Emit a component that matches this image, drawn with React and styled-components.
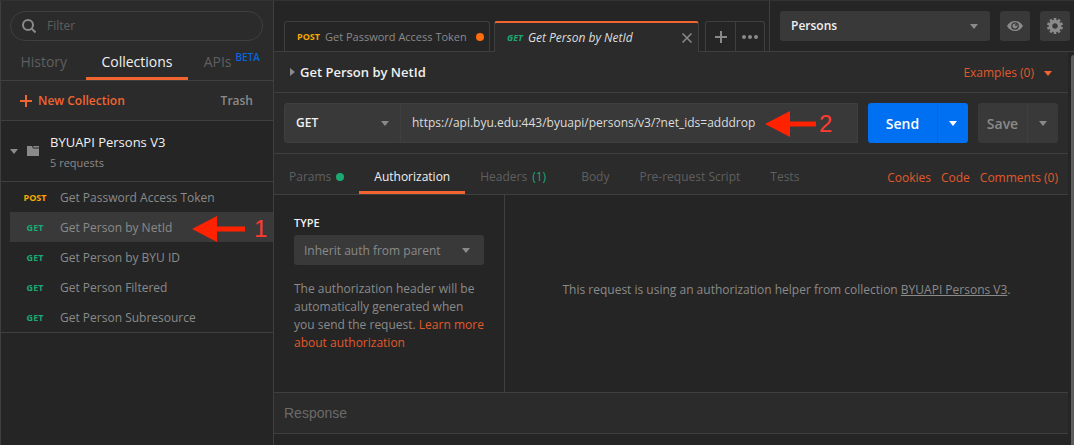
import React from 'react';
import styled, { createGlobalStyle, css } from 'styled-components';

const c = {
  panel: '#2b2b2b',
  base: '#252525',
  field: '#393939',
  line: '#3f3f3f',
  text: '#f0f0f0',
  soft: '#8a8a8a',
  faint: '#5f5f5f',
  orange: '#f26430',
  link: '#e0592b',
  green: '#1ba873',
  amber: '#f5a800',
  blue: '#0070f2',
  red: '#ff2200',
};

const Global = createGlobalStyle`
  * { box-sizing: border-box; }
  body {
    margin: 0;
    background: ${c.base};
    color: ${c.soft};
    font: 12px/18px "Open Sans", sans-serif;
  }
  button, input, select { font: inherit; color: inherit; margin: 0; padding: 0; border: 0; border-radius: 0; background: none; }
  button { cursor: pointer; white-space: nowrap; }
  svg { display: block; flex: none; }
`;

const Window = styled.div`
  display: flex;
  min-height: 100vh;
  border-top: 1px solid #323232;
`;

const Sidebar = styled.aside`
  position: relative;
  flex: none;
  width: 274px;
  border: solid ${c.line};
  border-width: 0 1px;
`;

const SidebarHead = styled.div`
  padding-top: 10px;
  background: ${c.panel};
`;

const FilterBox = styled.label`
  display: flex;
  align-items: center;
  gap: 11px;
  height: 30px;
  margin: 0 10px 0 9px;
  padding: 0 11px;
  border: 1px solid ${c.line};
  border-radius: 15px;
`;

const FilterInput = styled.input`
  flex: 1;
  min-width: 0;
  outline: 0;
  &::placeholder { color: ${c.faint}; opacity: 1; }
`;

const SidebarTabs = styled.nav`
  display: grid;
  grid-template-columns: 1fr auto 1fr;
  height: 40px;
  border-bottom: 1px solid ${c.line};
`;

const SidebarTab = styled.button`
  display: flex;
  justify-content: center;
  align-items: center;
  gap: 4px;
  padding: 3px 15px 0;
  font-size: 14px;
  color: ${p => (p.$active ? c.text : c.faint)};
  box-shadow: ${p => (p.$active ? `inset 0 -3px ${c.orange}` : 'none')};
`;

const Beta = styled.sup`
  align-self: flex-start;
  margin: 4px -3px 0 0;
  font-size: 10px;
  line-height: 18px;
  font-weight: 600;
  color: #0766dc;
`;

const SidebarActions = styled.div`
  display: flex;
  justify-content: space-between;
  align-items: center;
  height: 40px;
  padding: 0 20px 0 19px;
  border-bottom: 1px solid ${c.line};
`;

const TextAction = styled.button`
  display: flex;
  align-items: center;
  gap: 6px;
  font-weight: 600;
  color: ${p => (p.$accent ? c.orange : c.soft)};
`;

const Collection = styled.section`
  border-bottom: 1px solid ${c.line};
`;

const CollectionHead = styled.button`
  display: flex;
  align-items: center;
  width: 100%;
  height: 61px;
  padding-left: 9px;
  border-bottom: 1px solid ${c.line};
  text-align: left;
`;

const FolderIcon = styled.svg`
  margin: 0 11px 0 9px;
`;

const CollectionText = styled.span`
  padding-top: 2px;
`;

const CollectionName = styled.span`
  display: block;
  font-size: 13px;
  line-height: 22px;
  color: ${c.text};
`;

const CollectionCount = styled.span`
  display: block;
  font-size: 11px;
  line-height: 20px;
`;

const RequestRow = styled.button`
  display: grid;
  grid-template-columns: 50px 1fr;
  align-items: center;
  width: calc(100% - 9px);
  height: 30px;
  margin-left: 9px;
  padding-top: 2px;
  text-align: left;
  background: ${p => (p.$active ? c.field : 'transparent')};
`;

const Method = styled.span`
  font-size: 9px;
  font-weight: 700;
  text-align: center;
  color: ${p => (p.$post ? c.amber : c.green)};
`;

const Main = styled.main`
  flex: 1;
  min-width: 0;
  display: flex;
  flex-direction: column;
`;

const TopBar = styled.header`
  display: flex;
  height: 51px;
`;

const TabStrip = styled.div`
  display: flex;
  align-items: flex-end;
  flex: 1;
  padding-left: 10px;
  border-bottom: 1px solid ${c.line};
`;

const RequestTab = styled.div`
  display: flex;
  align-items: center;
  height: 30px;
  border: 1px solid ${c.line};
  border-bottom: 0;
  border-radius: 3px 3px 0 0;
  font-size: 11px;
  ${p => p.$active ? css`
    width: 205px;
    height: 31px;
    margin: 0 6px -1px 4px;
    padding: 0 6px 0 12px;
    border-top: 2px solid ${c.orange};
    background: ${c.panel};
    color: #dedede;
    font-size: 12px;
    font-style: italic;
  ` : css`
    width: 206px;
    padding: 0 5px 0 12px;
  `}
`;

const TabLabel = styled.span`
  flex: 1;
  margin-left: 5px;
  white-space: nowrap;
`;

const Dot = styled.span`
  width: 8px;
  height: 8px;
  border-radius: 50%;
  background: ${p => p.$color};
`;

const TabTools = styled.div`
  display: flex;
  height: 30px;
  border: 1px solid ${c.line};
  border-bottom: 0;
  border-radius: 3px 3px 0 0;
`;

const TabTool = styled.button`
  display: grid;
  place-items: center;
  width: 29px;
  & + & { border-left: 1px solid ${c.line}; }
`;

const EnvBar = styled.div`
  display: flex;
  gap: 10px;
  padding: 10px 4px 0 10px;
  border: solid ${c.line};
  border-width: 0 0 1px 1px;
`;

const Picker = styled.div`
  display: grid;
  align-items: center;
  width: ${p => p.$width};
  height: ${p => p.$height};
  border-radius: 3px;
  background: ${c.field};
  & > * { grid-area: 1 / 1; }
  & > svg { justify-self: end; margin-right: ${p => p.$inset}; pointer-events: none; }
`;

const PickerSelect = styled.select`
  appearance: none;
  width: 100%;
  height: 100%;
  padding: ${p => (p.$bright ? '0' : '2px')} 30px 0 ${p => p.$pad};
  outline: 0;
  color: ${p => (p.$bright ? c.text : c.soft)};
  font-weight: ${p => (p.$bright ? 600 : 400)};
`;

const SquareButton = styled.button`
  display: grid;
  place-items: center;
  width: 30px;
  height: 30px;
  border-radius: 3px;
  background: ${c.field};
`;

const Body = styled.div`
  flex: 1;
  display: flex;
`;

const Request = styled.div`
  flex: 1;
  min-width: 0;
`;

const Gutter = styled.div`
  width: 6px;
  padding: 3px 0 0 3px;
`;

const ScrollThumb = styled.div`
  height: 100%;
  border-radius: 3px 0 0 0;
  background: #5c5c5c;
`;

const Bar = styled.div`
  display: flex;
  align-items: center;
  justify-content: space-between;
  height: ${p => (p.$tall ? '61px' : '41px')};
  padding: 0 10px;
  border-bottom: 1px solid ${c.line};
  background: ${c.panel};
`;

const Title = styled.h1`
  display: flex;
  align-items: center;
  gap: 5px;
  margin: 0;
  padding-left: 6px;
  font-size: 13px;
  font-weight: 600;
  color: ${c.text};
`;

const LinkButton = styled.button`
  display: flex;
  align-items: center;
  gap: 10px;
  padding: 2px 6px 0 0;
  color: ${c.link};
`;

const UrlBox = styled.div`
  flex: 1;
  display: flex;
  height: 40px;
  border: 1px solid ${c.line};
  border-radius: 3px 0 0 3px;
  background: ${c.field};
`;

const UrlInput = styled.input`
  flex: 1;
  min-width: 0;
  padding: 0 11px;
  border-left: 1px solid ${c.line};
  outline: 0;
  color: #dcdcdc;
`;

const Split = styled.div`
  display: flex;
  width: ${p => p.$width};
  height: 40px;
  margin-left: 10px;
  border-radius: 3px;
  background: ${p => (p.$primary ? c.blue : c.field)};
  color: ${p => (p.$primary ? '#fff' : c.soft)};
  font-size: 14px;
  font-weight: 600;
`;

const SplitMain = styled.button`
  flex: 1;
  padding-top: 2px;
`;

const SplitMore = styled.button`
  display: grid;
  place-items: center;
  width: 31px;
  border-left: 1px solid ${p => (p.$primary ? '#0a63dc' : c.line)};
`;

const TabsBar = styled(Bar)`
  align-items: stretch;
  padding-left: 0;
`;

const SectionTabs = styled.nav`
  display: flex;
`;

const SectionTab = styled.button`
  display: flex;
  align-items: center;
  gap: 5px;
  padding: 6px 15px 0;
  color: ${p => (p.$active ? c.text : c.faint)};
  box-shadow: ${p => (p.$active ? `inset 0 -3px ${c.orange}` : 'none')};
`;

const Count = styled.span`
  padding-right: 5px;
  color: ${c.green};
`;

const TabLinks = styled.div`
  display: flex;
  align-items: center;
  gap: 10px;
  padding-top: 8px;
`;

const Link = styled.a`
  color: ${p => (p.$plain ? 'inherit' : c.link)};
  text-decoration: ${p => (p.$plain ? 'underline' : 'none')};
`;

const Auth = styled.section`
  display: flex;
  border-bottom: 1px solid ${c.line};
`;

const AuthType = styled.div`
  flex: none;
  width: 231px;
  padding: 19px 20px 40px;
  border-right: 1px solid ${c.line};
`;

const TypeLabel = styled.label`
  display: block;
  margin-bottom: 3px;
  font-size: 11px;
  font-weight: 600;
  color: ${c.text};
`;

const Hint = styled.p`
  margin: 15px -2px 0 0;
`;

const AuthNote = styled.div`
  flex: 1;
  display: flex;
  align-items: center;
  justify-content: center;
  padding-bottom: 8px;
`;

const ResponseTitle = styled.h2`
  margin: 0;
  font: 14px/20px "Liberation Sans", sans-serif;
  color: #6a6a6a;
`;

const Callout = styled.div`
  position: absolute;
  top: ${p => p.$top};
  left: ${p => p.$left};
  display: flex;
  align-items: center;
  gap: ${p => p.$gap};
  font: 24px/24px "Liberation Sans", sans-serif;
  color: #ff3b30;
  pointer-events: none;
`;

const CalloutAnchor = styled.div`
  position: relative;
  flex: 1;
  display: flex;
  min-width: 0;
`;

const Caret = ({ color = c.soft }) => (
  <svg width="8" height="5" fill={color} aria-hidden="true"><path d="M0 0h8L4 5z" /></svg>
);

const Plus = ({ color = c.soft }) => (
  <svg width="12" height="12" stroke={color} strokeWidth="2" aria-hidden="true"><path d="M6 0v12M0 6h12" /></svg>
);

const Arrow = ({ length }) => (
  <svg width={length} height="26" fill={c.red} aria-hidden="true">
    <path d={`M0 13L25 0V10.500H${length}V15.500H25V26Z`} />
  </svg>
);

const requests = [
  { method: 'POST', name: 'Get Password Access Token' },
  { method: 'GET', name: 'Get Person by NetId', active: true },
  { method: 'GET', name: 'Get Person by BYU ID' },
  { method: 'GET', name: 'Get Person Filtered' },
  { method: 'GET', name: 'Get Person Subresource' },
];

const teeth = [0, 36, 72, 108, 144, 180, 216, 252, 288, 324];

export default function App() {
  return (
    <>
      <Global />
      <Window>
        <Sidebar>
          <SidebarHead>
            <FilterBox>
              <svg width="14" height="14" fill="none" stroke={c.soft} strokeWidth="2" aria-hidden="true"><circle cx="6" cy="6" r="5" /><path d="M9.500 9.500l4 4" /></svg>
              <FilterInput aria-label="Filter" placeholder="Filter" />
            </FilterBox>
            <SidebarTabs>
              <SidebarTab>History</SidebarTab>
              <SidebarTab $active>Collections</SidebarTab>
              <SidebarTab>APIs<Beta>BETA</Beta></SidebarTab>
            </SidebarTabs>
            <SidebarActions>
              <TextAction $accent><Plus color={c.orange} />New Collection</TextAction>
              <TextAction>Trash</TextAction>
            </SidebarActions>
          </SidebarHead>
          <Collection>
            <CollectionHead>
              <Caret />
              <FolderIcon width="12" height="10" fill={c.soft} aria-hidden="true">
                <path d="M0 0h5l1 2.500h6V10H0z" /><path d="M6 0h6v1.500H6.600z" />
              </FolderIcon>
              <CollectionText>
                <CollectionName>BYUAPI Persons V3</CollectionName>
                <CollectionCount>5 requests</CollectionCount>
              </CollectionText>
            </CollectionHead>
            {requests.map(r => (
              <RequestRow key={r.name} $active={r.active}>
                <Method $post={r.method === 'POST'}>{r.method}</Method>
                <span>{r.name}</span>
              </RequestRow>
            ))}
          </Collection>
          <Callout $top="215px" $left="191px" $gap="9px"><Arrow length={53} />1</Callout>
        </Sidebar>

        <Main>
          <TopBar>
            <TabStrip>
              <RequestTab>
                <Method $post>POST</Method>
                <TabLabel>Get Password Access Token</TabLabel>
                <Dot $color="#ff6c0c" />
              </RequestTab>
              <RequestTab $active>
                <Method>GET</Method>
                <TabLabel>Get Person by NetId</TabLabel>
                <button aria-label="Close tab">
                  <svg width="10" height="10" stroke={c.soft} strokeWidth="1.5" aria-hidden="true"><path d="M.5 .5l9 9M9.500 .5l-9 9" /></svg>
                </button>
              </RequestTab>
              <TabTools>
                <TabTool aria-label="New tab"><Plus /></TabTool>
                <TabTool aria-label="Tab options">
                  <svg width="16" height="4" fill={c.soft} aria-hidden="true"><circle cx="2" cy="2" r="2" /><circle cx="8" cy="2" r="2" /><circle cx="14" cy="2" r="2" /></svg>
                </TabTool>
              </TabTools>
            </TabStrip>
            <EnvBar>
              <Picker $width="210px" $height="30px" $inset="12px">
                <PickerSelect $bright $pad="11px" aria-label="Environment"><option>Persons</option></PickerSelect>
                <Caret />
              </Picker>
              <SquareButton aria-label="Environment quick look">
                <svg width="16" height="10" aria-hidden="true">
                  <path fill={c.soft} d="M0 5C2 1.700 4.700 0 8 0s6 1.700 8 5c-2 3.300-4.700 5-8 5S2 8.300 0 5z" />
                  <circle cx="8" cy="5" r="3.200" fill="none" stroke={c.field} strokeWidth="1.300" />
                  <circle cx="9" cy="4" r="1" fill={c.field} />
                </svg>
              </SquareButton>
              <SquareButton aria-label="Manage environments">
                <svg width="16" height="16" viewBox="-8 -8 16 16" aria-hidden="true">
                  <circle r="4.500" fill="none" stroke={c.soft} strokeWidth="3.400" />
                  {teeth.map(a => <rect key={a} x="-1.300" y="-8" width="2.600" height="3" fill={c.soft} transform={`rotate(${a})`} />)}
                </svg>
              </SquareButton>
            </EnvBar>
          </TopBar>

          <Body>
            <Request>
              <Bar>
                <Title>
                  <svg width="5" height="8" fill={c.soft} aria-hidden="true"><path d="M0 0v8l5-4z" /></svg>
                  Get Person by NetId
                </Title>
                <LinkButton>Examples (0)<Caret color={c.orange} /></LinkButton>
              </Bar>
              <Bar $tall>
                <CalloutAnchor>
                  <UrlBox>
                    <Picker $width="115px" $height="38px" $inset="11px">
                      <PickerSelect $bright $pad="11px" aria-label="Method"><option>GET</option></PickerSelect>
                      <Caret />
                    </Picker>
                    <UrlInput aria-label="Request URL" defaultValue="https://api.byu.edu:443/byuapi/persons/v3/?net_ids=adddrop" />
                  </UrlBox>
                  <Callout $top="8px" $left="481px" $gap="3px"><Arrow length={51} />2</Callout>
                </CalloutAnchor>
                <Split $primary $width="100px">
                  <SplitMain>Send</SplitMain>
                  <SplitMore $primary aria-label="Send options"><Caret color="#fff" /></SplitMore>
                </Split>
                <Split $width="80px">
                  <SplitMain>Save</SplitMain>
                  <SplitMore aria-label="Save options"><Caret /></SplitMore>
                </Split>
              </Bar>
              <TabsBar>
                <SectionTabs>
                  <SectionTab>Params<Dot $color={c.green} /></SectionTab>
                  <SectionTab $active>Authorization</SectionTab>
                  <SectionTab>Headers<Count>(1)</Count></SectionTab>
                  <SectionTab>Body</SectionTab>
                  <SectionTab>Pre-request Script</SectionTab>
                  <SectionTab>Tests</SectionTab>
                </SectionTabs>
                <TabLinks>
                  <Link href="#cookies">Cookies</Link>
                  <Link href="#code">Code</Link>
                  <Link href="#comments">Comments (0)</Link>
                </TabLinks>
              </TabsBar>
              <Auth>
                <AuthType>
                  <TypeLabel htmlFor="auth-type">TYPE</TypeLabel>
                  <Picker $width="100%" $height="30px" $inset="14px">
                    <PickerSelect id="auth-type" $pad="10px"><option>Inherit auth from parent</option></PickerSelect>
                    <Caret />
                  </Picker>
                  <Hint>
                    The authorization header will be automatically generated when you send the request.{' '}
                    <Link href="#learn">Learn more about authorization</Link>
                  </Hint>
                </AuthType>
                <AuthNote>
                  <span>This request is using an authorization helper from collection <Link $plain href="#collection">BYUAPI Persons V3</Link>.</span>
                </AuthNote>
              </Auth>
              <Bar><ResponseTitle>Response</ResponseTitle></Bar>
            </Request>
            <Gutter><ScrollThumb /></Gutter>
          </Body>
        </Main>
      </Window>
    </>
  );
}
